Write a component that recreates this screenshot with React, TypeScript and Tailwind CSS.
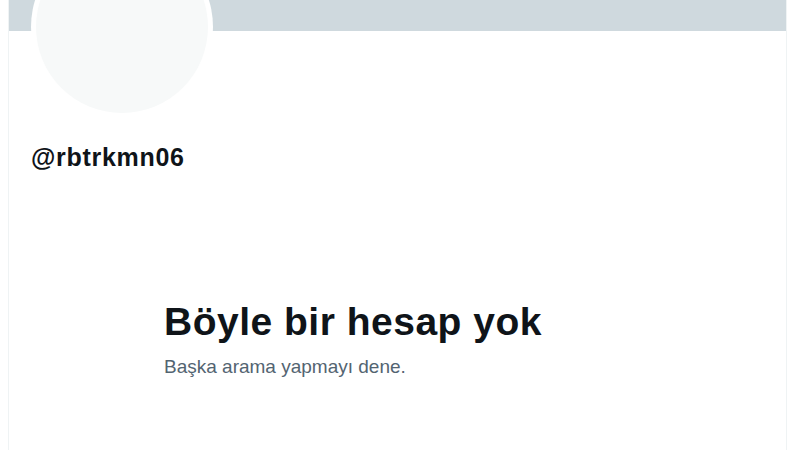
export default function App() {
  return (
    <div className="w-[800px] h-[450px] bg-white overflow-hidden font-['Liberation_Sans',Arial,sans-serif]">
      <div className="ml-[8px] w-[779px] h-full border-x border-[#eff3f4]">
        {/* banner */}
        <div className="h-[31px] bg-[#cfd9de]" />

        {/* avatar + handle */}
        <div className="pl-[22px]">
          <div className="-mt-[95px] w-[182px] h-[182px] rounded-full bg-white p-[5px]">
            <div className="w-full h-full rounded-full bg-[#f7f9f9]" />
          </div>
          <div className="mt-[24px] text-[25px] leading-[30px] font-bold tracking-[0.7px] text-[#0f1419]">@rbtrkmn06</div>
        </div>

        {/* empty state */}
        <div className="pl-[155px] mt-[127px]">
          <h1 className="text-[39px] leading-[46px] font-bold tracking-[0.5px] text-[#0f1419]">Böyle bir hesap yok</h1>
          <p className="mt-[10px] text-[19px] leading-[24px] text-[#536471]">Başka arama yapmayı dene.</p>
        </div>
      </div>
    </div>
  );
}
